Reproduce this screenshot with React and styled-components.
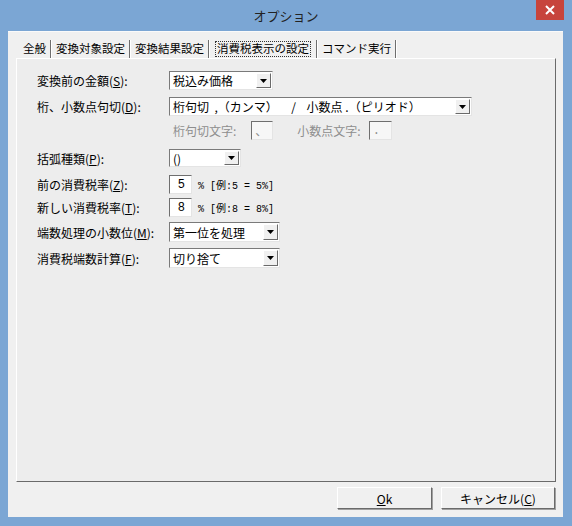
import React from 'react';
import styled, { createGlobalStyle } from 'styled-components';

const GlobalStyle = createGlobalStyle`
	html, body {
		margin: 0;
		padding: 0;
		background: #7ba6d4;
	}
	body {
		font-family: "Noto Sans CJK JP", "Noto Sans", sans-serif;
		font-size: 12px;
		color: #000;
	}
`;

const Window = styled.div`
	width: 572px;
	height: 526px;
	display: flex;
	flex-direction: column;
	background: #7ba6d4;
	box-sizing: border-box;
`;

const TitleBar = styled.div`
	height: 31px;
	display: flex;
	align-items: center;
	justify-content: center;
	position: relative;
	font-size: 13px;
	color: #222;
`;

const CloseButton = styled.div`
	position: absolute;
	top: 0;
	right: 8px;
	width: 28px;
	height: 20px;
	background: #c7443c;
	display: flex;
	align-items: center;
	justify-content: center;
`;

const Client = styled.div`
	flex: 1;
	margin: 0 9px 9px 8px;
	background: #f0f0f0;
	border-top: 1px solid #fafafa;
	padding: 8px 7px 0 8px;
	display: flex;
	flex-direction: column;
`;

const TabBar = styled.div`
	display: flex;
	align-items: stretch;
	height: 18px;
	padding-left: 3px;
	font-size: 11.5px;
`;

const Tab = styled.div`
	display: flex;
	align-items: center;
	padding: 0 ${(p) => (p.$active ? 6 : 3)}px;
	border-right: 1px solid #6e6e6e;
	box-shadow: 1px 0 0 #ffffff;
	margin-right: 1px;
	white-space: nowrap;
	line-height: 1;
`;

const TabLabel = styled.span`
	padding: 1px 1px;
	outline: ${(p) => (p.$focused ? '1px dotted #333' : 'none')};
`;

const Panel = styled.div`
	height: 424px;
	box-sizing: border-box;
	border-top: 1px solid #ffffff;
	border-left: 1px solid #ffffff;
	border-right: 1px solid #6a6a6a;
	border-bottom: 1px solid #6a6a6a;
	background: #ededed;
	padding: 12px 0 0 20px;
	display: flex;
	flex-direction: column;
`;

const Row = styled.div`
	display: flex;
	align-items: center;
	height: ${(p) => p.$h || 19}px;
	margin-top: ${(p) => p.$gap || 0}px;
`;

const Label = styled.div`
	width: 132px;
	white-space: nowrap;
`;

const SubLabel = styled.span`
	color: #8e8e8e;
	margin-left: ${(p) => p.$ml || 0}px;
	margin-right: ${(p) => p.$mr || 8}px;
	white-space: nowrap;
`;

const Key = styled.span`
	text-decoration: underline;
`;

const Combo = styled.div`
	width: ${(p) => p.$w}px;
	height: ${(p) => p.$h || 19}px;
	box-sizing: border-box;
	background: #fff;
	border: 1px solid;
	border-color: #7a7a7a #e4e4e4 #e4e4e4 #7a7a7a;
	display: flex;
	align-items: center;
	justify-content: space-between;
	padding-left: 3px;
	white-space: pre;
`;

const ArrowBox = styled.div`
	width: 15px;
	height: calc(100% - 2px);
	margin-right: 1px;
	box-sizing: border-box;
	background: #f0f0f0;
	border: 1px solid;
	border-color: #ffffff #6a6a6a #6a6a6a #ffffff;
	display: flex;
	align-items: center;
	justify-content: center;
`;

const TextBox = styled.div`
	width: ${(p) => p.$w || 23}px;
	height: 19px;
	box-sizing: border-box;
	background: ${(p) => (p.$disabled ? '#f7f7f7' : '#fff')};
	border: 1px solid;
	border-color: #6f6f6f #e4e4e4 #e4e4e4 #6f6f6f;
	display: flex;
	align-items: center;
	justify-content: ${(p) => (p.$right ? 'flex-end' : 'flex-start')};
	padding: 0 ${(p) => (p.$right ? 6 : 3)}px;
	color: ${(p) => (p.$disabled ? '#8e8e8e' : '#000')};
	font-family: "Liberation Mono", "Noto Sans CJK JP", monospace;
`;

const Note = styled.span`
	margin-left: 6px;
	font-family: "Liberation Mono", "Noto Sans CJK JP", monospace;
	font-size: 10px;
	white-space: pre;
`;

const ButtonRow = styled.div`
	display: flex;
	justify-content: flex-end;
	gap: 9px;
	margin-top: 5px;
	padding-right: 1px;
`;

const Button = styled.div`
	width: ${(p) => p.$w}px;
	height: 22px;
	box-sizing: border-box;
	background: #f0f0f0;
	border: 1px solid;
	border-color: #ffffff #6a6a6a #6a6a6a #ffffff;
	box-shadow: 1px 1px 0 #a0a0a0;
	display: flex;
	align-items: center;
	justify-content: center;
`;

const Arrow = () => (
	<svg width="7" height="4" viewBox="0 0 7 4">
		<path d="M0 0h7L3.5 4z" fill="#000" />
	</svg>
);

const Dropdown = ({ w, h, children }) => (
	<Combo $w={w} $h={h}>
		<span>{children}</span>
		<ArrowBox>
			<Arrow />
		</ArrowBox>
	</Combo>
);

const tabs = ['全般', '変換対象設定', '変換結果設定', '消費税表示の設定', 'コマンド実行'];

const App = () => {
	return (
		<Window>
			<GlobalStyle />
			<TitleBar>
				オプション
				<CloseButton>
					<svg width="10" height="10" viewBox="0 0 10 10">
						<path d="M1 1L9 9M9 1L1 9" stroke="#fff" strokeWidth="2" />
					</svg>
				</CloseButton>
			</TitleBar>
			<Client>
				<TabBar>
					{tabs.map((t, i) => (
						<Tab key={t} $active={i === 3}>
							<TabLabel $focused={i === 3}>{t}</TabLabel>
						</Tab>
					))}
				</TabBar>
				<Panel>
					<Row>
						<Label>
							変換前の金額(<Key>S</Key>):
						</Label>
						<Dropdown w={104}>税込み価格</Dropdown>
					</Row>
					<Row $gap={7}>
						<Label>
							桁、小数点句切(<Key>D</Key>):
						</Label>
						<Dropdown w={303}>{'桁句切  ,（カンマ）     /    小数点 .（ピリオド）'}</Dropdown>
					</Row>
					<Row $gap={5}>
						<Label />
						<SubLabel $ml={4} $mr={15}>桁句切文字:</SubLabel>
						<TextBox $w={22} $disabled>、</TextBox>
						<SubLabel $ml={24} $mr={8}>小数点文字:</SubLabel>
						<TextBox $w={23} $disabled>.</TextBox>
					</Row>
					<Row $gap={9} $h={18}>
						<Label>
							括弧種類(<Key>P</Key>):
						</Label>
						<Dropdown w={72} h={18}>()</Dropdown>
					</Row>
					<Row $gap={8}>
						<Label>
							前の消費税率(<Key>Z</Key>):
						</Label>
						<TextBox $w={23} $right>5</TextBox>
						<Note>{'% [例:5 = 5%]'}</Note>
					</Row>
					<Row $gap={4}>
						<Label>
							新しい消費税率(<Key>T</Key>):
						</Label>
						<TextBox $w={23} $right>8</TextBox>
						<Note>{'% [例:8 = 8%]'}</Note>
					</Row>
					<Row $gap={5} $h={20}>
						<Label>
							端数処理の小数位(<Key>M</Key>):
						</Label>
						<Dropdown w={111} h={20}>第一位を処理</Dropdown>
					</Row>
					<Row $gap={6} $h={20}>
						<Label>
							消費税端数計算(<Key>F</Key>):
						</Label>
						<Dropdown w={111} h={20}>切り捨て</Dropdown>
					</Row>
				</Panel>
				<ButtonRow>
					<Button $w={95}>
						<span>
							<Key>O</Key>k
						</span>
					</Button>
					<Button $w={114}>
						<span>
							キャンセル(<Key>C</Key>)
						</span>
					</Button>
				</ButtonRow>
			</Client>
		</Window>
	);
};

export default App;
